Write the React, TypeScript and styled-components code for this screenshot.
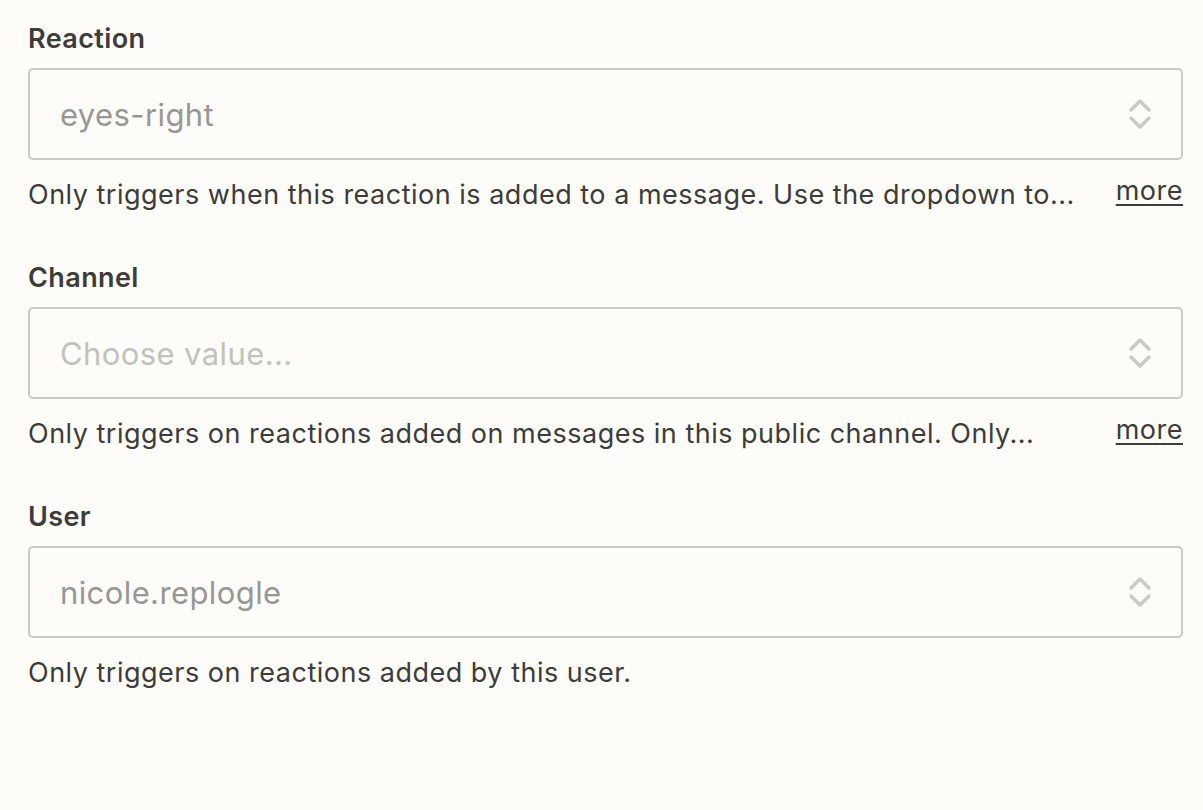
import React from 'react';
import styled, { createGlobalStyle } from 'styled-components';

const GlobalStyle = createGlobalStyle`
  html, body {
    margin: 0;
    padding: 0;
    background: #fdfcf9;
  }
  body {
    font-family: Inter, "Noto Sans", "Liberation Sans", sans-serif;
    color: #3d3c3a;
  }
`;

const Form = styled.div`
  padding: 23px 20px 0 28px;
  display: flex;
  flex-direction: column;
  gap: 48px;
`;

const Field = styled.div`
  display: flex;
  flex-direction: column;
`;

const Label = styled.div`
  font-size: 27px;
  font-weight: 600;
  line-height: 32px;
  letter-spacing: 0.4px;
  color: #3d3c3a;
  margin-bottom: 13px;
`;

const SelectBox = styled.div`
  height: 92px;
  box-sizing: border-box;
  border: 2px solid #cbc9c4;
  border-radius: 5px;
  display: flex;
  align-items: center;
  padding: 0 28px 0 30px;
`;

const Value = styled.span<{ $placeholder?: boolean }>`
  flex: 1;
  font-size: 31px;
  letter-spacing: 0.4px;
  color: ${({ $placeholder }) => ($placeholder ? '#c3c1bc' : '#999794')};
`;

const HelpRow = styled.div`
  display: flex;
  align-items: flex-start;
  justify-content: space-between;
  margin-top: 16px;
`;

const HelpText = styled.span`
  font-size: 27px;
  line-height: 38px;
  letter-spacing: 0.5px;
  color: #3d3c3a;
`;

const More = styled.a`
  font-size: 27px;
  line-height: 30px;
  letter-spacing: 0.5px;
  color: #3d3c3a;
  text-decoration: underline;
  text-underline-offset: 4px;
`;

const Chevrons = () => (
  <svg width="26" height="36" viewBox="0 0 26 36" fill="none">
    <path d="M4 14L13 5L22 14" stroke="#cbc9c4" strokeWidth="3.5" strokeLinecap="round" strokeLinejoin="round" />
    <path d="M4 22L13 31L22 22" stroke="#cbc9c4" strokeWidth="3.5" strokeLinecap="round" strokeLinejoin="round" />
  </svg>
);

const fields = [
  {
    label: 'Reaction',
    value: 'eyes-right',
    placeholder: false,
    help: 'Only triggers when this reaction is added to a message. Use the dropdown to...',
    more: true,
  },
  {
    label: 'Channel',
    value: 'Choose value...',
    placeholder: true,
    help: 'Only triggers on reactions added on messages in this public channel. Only...',
    more: true,
  },
  {
    label: 'User',
    value: 'nicole.replogle',
    placeholder: false,
    help: 'Only triggers on reactions added by this user.',
    more: false,
  },
];

const App: React.FC = () => {
  return (
    <>
      <GlobalStyle />
      <Form>
        {fields.map((f) => (
          <Field key={f.label}>
            <Label>{f.label}</Label>
            <SelectBox>
              <Value $placeholder={f.placeholder}>{f.value}</Value>
              <Chevrons />
            </SelectBox>
            <HelpRow>
              <HelpText>{f.help}</HelpText>
              {f.more && <More>more</More>}
            </HelpRow>
          </Field>
        ))}
      </Form>
    </>
  );
};

export default App;
